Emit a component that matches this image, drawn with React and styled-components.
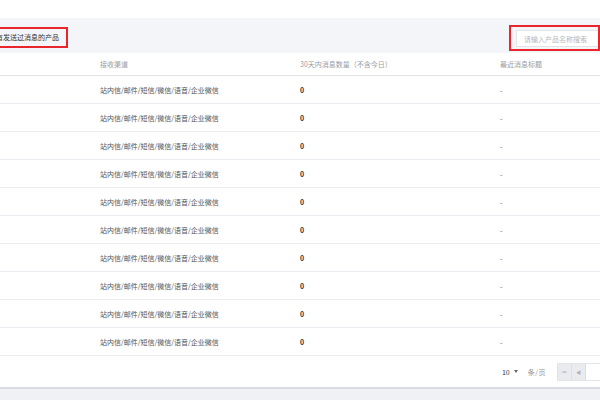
import styled, { createGlobalStyle } from 'styled-components';

const Global = createGlobalStyle`
  html, body {
    margin: 0;
    padding: 0;
    background: #fff;
    overflow: hidden;
  }
  body {
    font-family: "Noto Sans CJK SC", "Noto Sans", sans-serif;
    font-size: 7px;
    color: #333;
  }
`;

const Page = styled.div`
  width: 600px;
  height: 400px;
  overflow: hidden;
  padding-top: 18px;
  box-sizing: border-box;
  display: flex;
  flex-direction: column;
`;

const Toolbar = styled.div`
  height: 35px;
  background: #f4f5f8;
  display: flex;
  justify-content: space-between;
  align-items: flex-start;
`;

const Marked = styled.div`
  border: 2px solid #e8262b;
  margin-top: ${(p) => p.$top}px;
  margin-left: ${(p) => p.$left || 0}px;
  display: flex;
  align-items: center;
`;

const FilterText = styled.span`
  height: 17px;
  line-height: 17px;
  padding: 0 7px 0 4px;
  color: #333;
  white-space: nowrap;
`;

const SearchWrap = styled.div`
  padding: 3px 0 2px 5px;
`;

const SearchInput = styled.input`
  width: 82px;
  height: 17px;
  box-sizing: border-box;
  border: 1px solid #e3e4e8;
  border-right: none;
  background: #fff;
  padding: 0 0 0 7px;
  font-family: inherit;
  font-size: 7px;
  outline: none;
  &::placeholder {
    color: #b5b7bd;
  }
`;

const Row = styled.div`
  display: grid;
  grid-template-columns: 100px 200px 200px 1fr;
  align-items: center;
  height: ${(p) => (p.$head ? 22 : 27)}px;
  border-bottom: 1px solid ${(p) => (p.$head ? '#e2e3e8' : '#ececf0')};
  flex-shrink: 0;
`;

const Cell = styled.div`
  white-space: nowrap;
  color: ${(p) => (p.$head ? '#9a9ca3' : p.$strong ? '#333' : '#555')};
  font-weight: ${(p) => (p.$strong ? 700 : 400)};
`;

const Pager = styled.div`
  height: 31px;
  flex-shrink: 0;
  border-bottom: 2px solid #d9dbe1;
  display: flex;
  justify-content: flex-end;
  align-items: center;
`;

const SizeSelect = styled.span`
  color: #333;
  display: flex;
  align-items: center;
  gap: 4px;
  margin-right: 10px;
`;

const Caret = styled.span`
  width: 0;
  height: 0;
  border-left: 2.5px solid transparent;
  border-right: 2.5px solid transparent;
  border-top: 3px solid #666;
`;

const Unit = styled.span`
  color: #999;
  letter-spacing: 0.5px;
  margin-right: 11px;
`;

const PagerGroup = styled.div`
  display: flex;
  height: 16px;
  border: 1px solid #e3e4e8;
  border-right: none;
`;

const PagerBtn = styled.div`
  width: 13px;
  background: #e9ebef;
  border-right: 1px solid #dcdee3;
  display: flex;
  align-items: center;
  justify-content: center;
  color: #b0b3ba;
  font-size: 5px;
`;

const PageBox = styled.div`
  width: 14px;
  background: #fff;
`;

const Footer = styled.div`
  flex: 1;
  background: #f0f1f5;
`;

const rows = Array.from({ length: 10 });

export default function App() {
  return (
    <Page>
      <Global />
      <Toolbar>
        <Marked $top={9} $left={-10}>
          <FilterText>有发送过消息的产品</FilterText>
        </Marked>
        <Marked $top={7}>
          <SearchWrap>
            <SearchInput placeholder="请输入产品名称搜索" />
          </SearchWrap>
        </Marked>
      </Toolbar>
      <Row $head>
        <Cell $head />
        <Cell $head>接收渠道</Cell>
        <Cell $head>30天内消息数量（不含今日）</Cell>
        <Cell $head>最近消息标题</Cell>
      </Row>
      {rows.map((_, i) => (
        <Row key={i}>
          <Cell />
          <Cell>站内信/邮件/短信/微信/语音/企业微信</Cell>
          <Cell $strong>0</Cell>
          <Cell>-</Cell>
        </Row>
      ))}
      <Pager>
        <SizeSelect>
          10 <Caret />
        </SizeSelect>
        <Unit>条/页</Unit>
        <PagerGroup>
          <PagerBtn>⏮</PagerBtn>
          <PagerBtn>◀</PagerBtn>
          <PageBox />
        </PagerGroup>
      </Pager>
      <Footer />
    </Page>
  );
}
